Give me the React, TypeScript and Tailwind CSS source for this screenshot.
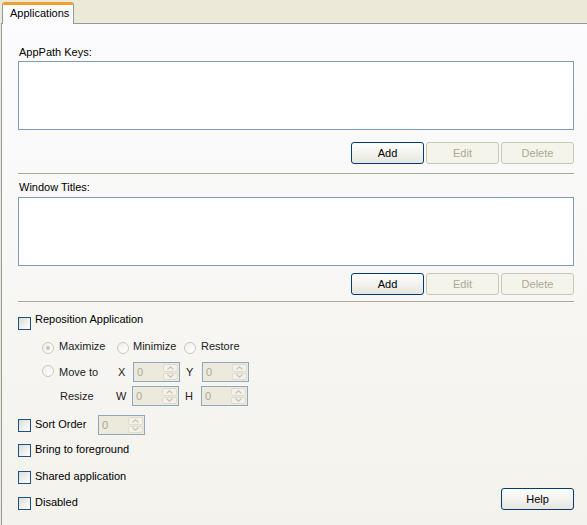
import React from 'react';

const Checkbox: React.FC = () => (
  <div className="h-[13px] w-[13px] shrink-0 border border-[#1c5180] bg-gradient-to-br from-[#dcdcd7] to-white" />
);

const Radio: React.FC<{ checked?: boolean }> = ({ checked }) => (
  <div className="flex h-[12px] w-[12px] shrink-0 items-center justify-center rounded-full border border-[#cac8bb] bg-gradient-to-br from-[#f0efe6] to-white">
    {checked && <div className="h-[4px] w-[4px] rounded-full bg-[#c6c4b6]" />}
  </div>
);

const Arrow: React.FC<{ down?: boolean }> = ({ down }) => (
  <svg width="7" height="4" viewBox="0 0 7 4" className={down ? 'rotate-180' : ''}>
    <path d="M0.5 3.5 L3.5 0.8 L6.5 3.5" stroke="#c8c5b6" strokeWidth="1.2" fill="none" />
  </svg>
);

const SpinBox: React.FC = () => (
  <div className="flex h-[20px] w-[47px] shrink-0 border border-[#8fa6c0] bg-[#ebeadb] p-px">
    <span className="flex-1 pl-[2px] leading-[16px] text-[#aca899]">0</span>
    <div className="flex w-[15px] flex-col gap-px">
      <div className="flex flex-1 items-center justify-center rounded-[2px] border border-[#dedbcf] bg-[#f3f2ea]">
        <Arrow />
      </div>
      <div className="flex flex-1 items-center justify-center rounded-[2px] border border-[#dedbcf] bg-[#f3f2ea]">
        <Arrow down />
      </div>
    </div>
  </div>
);

const Button: React.FC<{ label: string; disabled?: boolean }> = ({ label, disabled }) =>
  disabled ? (
    <div className="flex h-[22px] w-[73px] items-center justify-center rounded-[3px] border border-[#c9c7ba] bg-[#f5f4ea] text-[#aca899]">
      {label}
    </div>
  ) : (
    <div className="flex h-[22px] w-[73px] items-center justify-center rounded-[3px] border border-[#003c74] bg-gradient-to-b from-white to-[#e6e5de] text-black">
      {label}
    </div>
  );

const ButtonRow: React.FC<{ className: string }> = ({ className }) => (
  <div className={`flex justify-end gap-[2px] ${className}`}>
    <Button label="Add" />
    <Button label="Edit" disabled />
    <Button label="Delete" disabled />
  </div>
);

export default function App() {
  return (
    <div className="flex h-[525px] w-[587px] flex-col overflow-hidden bg-[#ece9d8] font-['Liberation_Sans',Arial,sans-serif] text-[11px] leading-[13px] text-black">
      <div className="flex h-[23px] items-end pl-[2px]">
        <div className="relative z-10 -mb-px h-[22px] w-[72px] rounded-t-[3px] border-x border-t-[3px] border-x-[#919b9c] border-t-[#f0a030] bg-[#fcfcfe] pl-[7px] pt-[2px]">
          Applications
        </div>
      </div>

      <div className="ml-px flex flex-1 flex-col border-l border-t border-[#919b9c] bg-gradient-to-b from-[#fcfcfe] to-[#f3f2ec] pl-[16px] pr-[13px]">
        <div className="mt-[22px] pl-px">AppPath Keys:</div>
        <div className="mt-[2px] h-[69px] border border-[#7f9db9] bg-white" />
        <ButtonRow className="mt-[12px]" />
        <div className="mt-[9px] h-px bg-[#aca899]" />

        <div className="mt-[7px] pl-px">Window Titles:</div>
        <div className="mt-[3px] h-[69px] border border-[#7f9db9] bg-white" />
        <ButtonRow className="mt-[7px]" />
        <div className="mt-[6px] h-px bg-[#aca899]" />

        <div className="mt-[11px] flex items-start gap-[4px]">
          <div className="mt-[4px]">
            <Checkbox />
          </div>
          <span>Reposition Application</span>
        </div>

        <div className="mt-[10px] flex items-start pl-[24px] text-[#222]">
          <div className="flex w-[75px] items-start gap-[5px]">
            <div className="mt-[2px]">
              <Radio checked />
            </div>
            <span>Maximize</span>
          </div>
          <div className="flex w-[67px] items-start gap-[4px]">
            <div className="mt-[2px]">
              <Radio />
            </div>
            <span>Minimize</span>
          </div>
          <div className="flex items-start gap-[5px]">
            <div className="mt-[2px]">
              <Radio />
            </div>
            <span>Restore</span>
          </div>
        </div>

        <div className="mt-[8px] flex h-[20px] items-center pl-[24px] text-[#222]">
          <div className="flex w-[75px] items-center gap-[5px]">
            <div className="-mt-[2px]">
              <Radio />
            </div>
            <span>Move to</span>
          </div>
          <span className="w-[16px] pl-px">X</span>
          <SpinBox />
          <span className="w-[22px] pl-[6px]">Y</span>
          <SpinBox />
        </div>

        <div className="mt-[4px] flex h-[20px] items-center pl-[24px] text-[#222]">
          <span className="w-[75px] pl-[18px]">Resize</span>
          <span className="w-[16px] -ml-px pr-px">W</span>
          <SpinBox />
          <span className="w-[22px] pl-[6px]">H</span>
          <SpinBox />
        </div>

        <div className="mt-[9px] flex h-[20px] items-center">
          <div className="flex w-[80px] items-center gap-[4px]">
            <Checkbox />
            <span className="-mt-[1px]">Sort Order</span>
          </div>
          <SpinBox />
        </div>

        <div className="mt-[9px] flex items-start gap-[4px]">
          <Checkbox />
          <span className="-mt-[1px]">Bring to foreground</span>
        </div>

        <div className="mt-[14px] flex items-start gap-[4px]">
          <Checkbox />
          <span className="-mt-[1px]">Shared application</span>
        </div>

        <div className="mt-[4px] flex items-end justify-between">
          <div className="flex items-start gap-[4px]">
            <Checkbox />
            <span className="-mt-[1px]">Disabled</span>
          </div>
          <Button label="Help" />
        </div>
      </div>
    </div>
  );
}
